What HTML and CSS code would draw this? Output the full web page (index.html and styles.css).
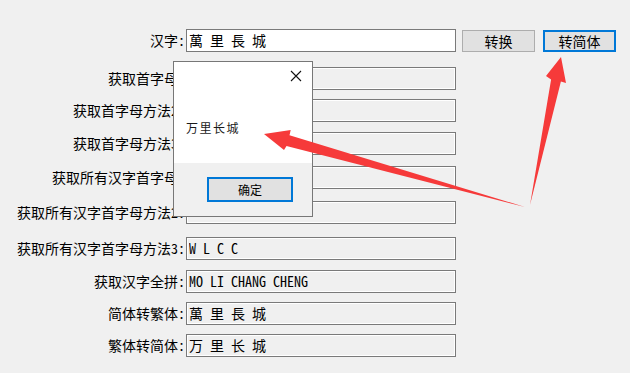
FILE: index.html
```html
<!DOCTYPE html>
<html>
<head>
    <title>汉字转换</title>
    <link rel="stylesheet" href="styles.css">
</head>
<body>
    <div class="form">
        <label>汉字:</label>
        <input class="field edit" type="text" value="萬 里 長 城">
        <div class="buttons">
            <button class="btn">转换</button>
            <button class="btn focus">转简体</button>
        </div>

        <label>获取首字母:</label>
        <input class="field" type="text" readonly value="">
        <label>获取首字母方法2:</label>
        <input class="field" type="text" readonly value="">
        <label>获取首字母方法3:</label>
        <input class="field" type="text" readonly value="">
        <label>获取所有汉字首字母:</label>
        <input class="field" type="text" readonly value="">
        <label>获取所有汉字首字母方法2:</label>
        <input class="field" type="text" readonly value="">
        <label>获取所有汉字首字母方法3:</label>
        <input class="field" type="text" readonly value="W L C C">
        <label>获取汉字全拼:</label>
        <input class="field" type="text" readonly value="MO LI CHANG CHENG">
        <label>简体转繁体:</label>
        <input class="field" type="text" readonly value="萬 里 長 城">
        <label>繁体转简体:</label>
        <input class="field" type="text" readonly value="万 里 长 城">
    </div>

    <!-- message box -->
    <div class="msgbox">
        <div class="msg-body">
            <span class="msg-close">
                <svg width="12" height="12" viewBox="0 0 12 12">
                    <path d="M1 1 L11 11 M11 1 L1 11" stroke="#111" stroke-width="1.1" fill="none"/>
                </svg>
            </span>
            <p class="msg-text">万里长城</p>
        </div>
        <div class="msg-foot">
            <button class="btn focus ok">确定</button>
        </div>
    </div>

    <!-- annotation arrows -->
    <svg class="marks" width="630" height="373" viewBox="0 0 630 373">
        <polygon fill="#f63a3a" points="561,57 566,83 560.9,81.5 530,205 551.1,79.5 546,76"/>
        <polygon fill="#f63a3a" points="264,134 290.7,130 289.5,135.3 525,207 286.5,145.9 284,150"/>
    </svg>
</body>
</html>
```
FILE: styles.css
```css
body {
	margin: 0;
	width: 630px;
	height: 373px;
	background-color: #f0f0f0;
	font-family: "Noto Sans CJK SC", "Liberation Sans", sans-serif;
	font-size: 13px;
	color: #000000;
	position: relative;
	overflow: hidden;
}

.form {
	display: grid;
	grid-template-columns: 186px 270px auto;
	grid-template-rows: 38px 32px 33px 34px 35px 36px 33px 32px 32px 24px;
	padding-top: 29px;
}

label {
	grid-column: 1;
	align-self: start;
	text-align: right;
	padding-right: 1px;
	height: 23px;
	line-height: 23px;
	white-space: nowrap;
	font-family: "Noto Sans Mono CJK SC", "Noto Sans CJK SC", monospace;
	font-size: 14px;
}

.field {
	align-self: start;
	box-sizing: border-box;
	width: 270px;
	height: 23px;
	margin: 0;
	padding: 0 2px 2px;
	border: 1px solid #7a7a7a;
	box-shadow: inset 0 0 0 1px #ffffff;
	background-color: #f0f0f0;
	font-family: "Noto Sans Mono CJK SC", "Liberation Mono", "Noto Sans CJK SC", monospace;
	font-size: 14px;
	color: #000000;
	outline: none;
}

.field.edit {
	background-color: #ffffff;
}

.buttons {
	display: flex;
	gap: 8px;
	padding-left: 6px;
	padding-top: 1px;
	align-self: start;
}

.btn {
	box-sizing: border-box;
	width: 73px;
	height: 22px;
	margin: 0;
	padding: 0;
	background-color: #e1e1e1;
	border: 1px solid #adadad;
	font-family: "Noto Sans CJK SC", sans-serif;
	font-size: 14px;
	line-height: 18px;
	color: #000000;
}

.btn.focus {
	border: 2px solid #0078d7;
}

.msgbox {
	position: absolute;
	left: 173px;
	top: 61px;
	width: 140px;
	height: 156px;
	box-sizing: border-box;
	border: 1px solid #777777;
	display: flex;
	flex-direction: column;
	background-color: #f0f0f0;
}

.msg-body {
	position: relative;
	height: 101px;
	background-color: #ffffff;
}

.msg-close {
	position: absolute;
	right: 10px;
	top: 8px;
	line-height: 0;
}

.msg-text {
	margin: 0;
	padding: 57px 0 0 12px;
	font-size: 12px;
	letter-spacing: 1.5px;
	color: #1a1a1a;
}

.msg-foot {
	flex: 1;
	display: flex;
	justify-content: center;
	padding-top: 14px;
	padding-left: 14px;
}

.btn.ok {
	width: 86px;
	height: 25px;
	font-size: 12px;
}

.marks {
	position: absolute;
	left: 0;
	top: 0;
	pointer-events: none;
}
```
